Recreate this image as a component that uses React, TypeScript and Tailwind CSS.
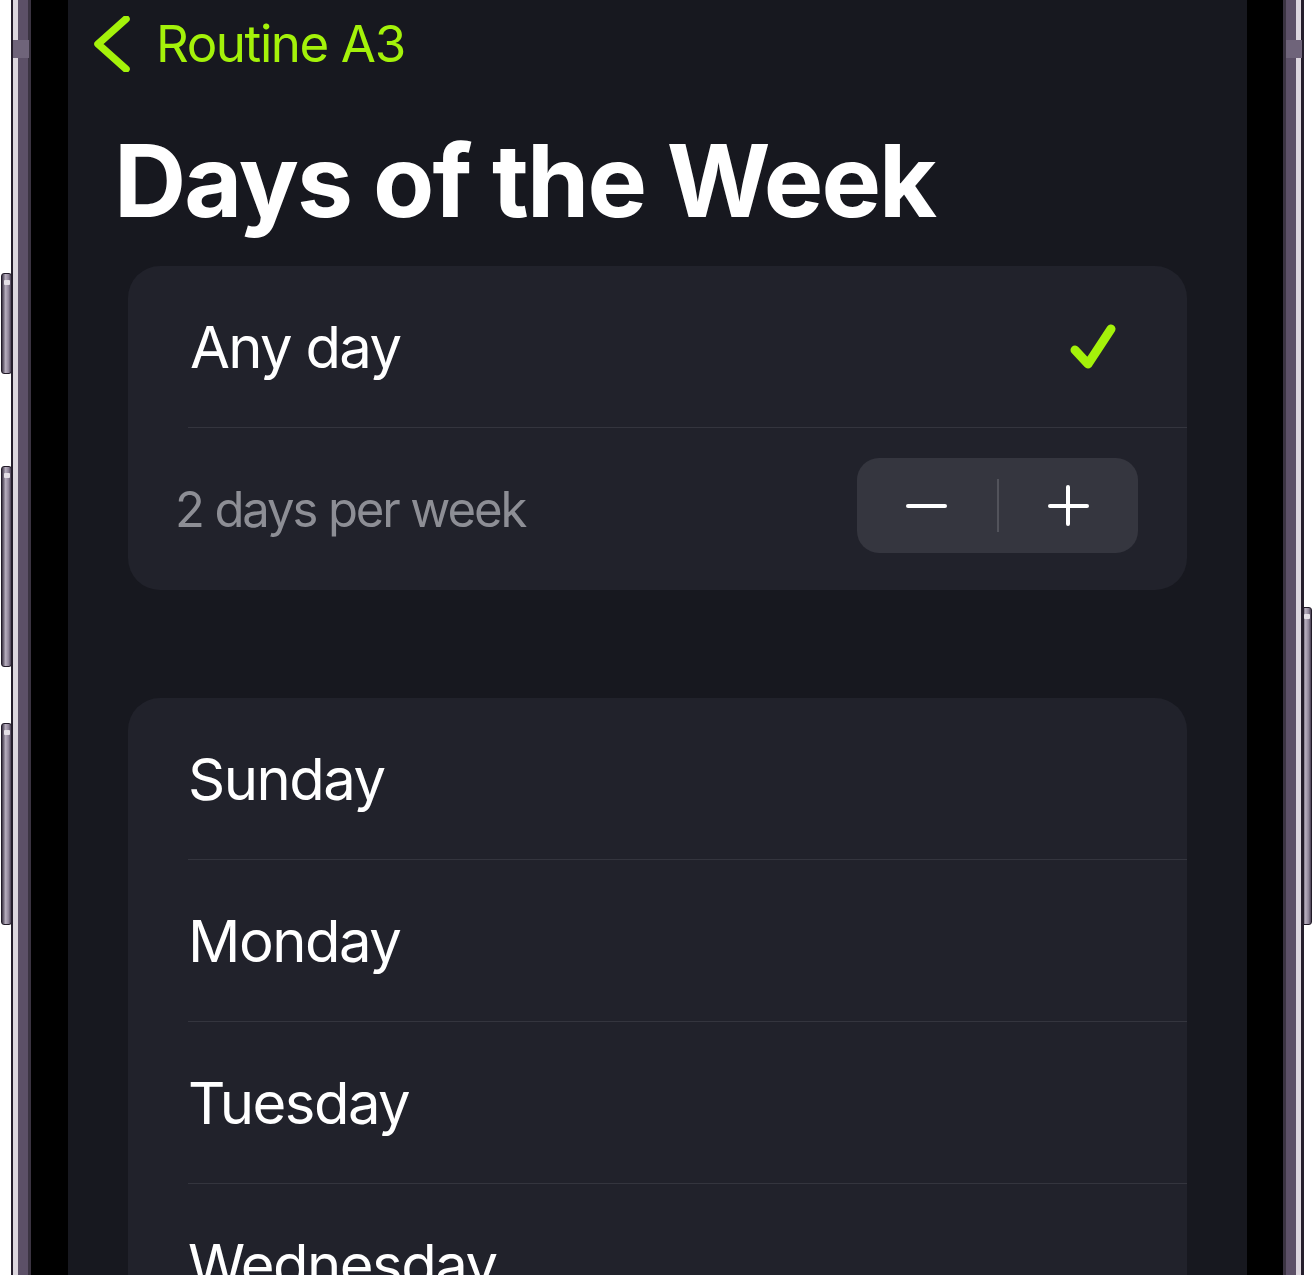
import React from "react";

const days = ["Sunday", "Monday", "Tuesday", "Wednesday"];

function SideButton({ className }: { className: string }) {
  return (
    <div
      className={`absolute w-[11px] rounded-[3px] border border-[#221b28] bg-[linear-gradient(to_right,#3b3344,#b6adbd_40%,#8c8196_75%,#4a4152)] ${className}`}
    >
      <div className="mx-auto mt-[6px] h-[5px] w-[6px] rounded-[1px] bg-[#e4dfe6]" />
    </div>
  );
}

export default function App() {
  return (
    <div
      className="relative h-[1275px] w-[1312px] overflow-hidden bg-white"
      style={{ fontFamily: "Inter, 'Noto Sans', sans-serif" }}
    >
      {/* hardware buttons */}
      <SideButton className="left-[1px] top-[273px] h-[101px]" />
      <SideButton className="left-[1px] top-[466px] h-[201px]" />
      <SideButton className="left-[1px] top-[723px] h-[202px]" />
      <SideButton className="left-[1301px] top-[607px] h-[318px]" />

      <div className="ml-[11px] flex h-full w-[1293px]">
        {/* left frame */}
        <div className="relative w-[20px] bg-[linear-gradient(to_right,#241d2b_0px,#241d2b_2px,#dcd6de_2px,#dcd6de_7px,#5c5067_7px,#5c5067_17px,#3a3341_17px)]">
          <div className="absolute left-[2px] top-[40px] h-[18px] w-[16px] bg-[#6f647a]" />
        </div>
        <div className="w-[37px] bg-black" />

        {/* screen */}
        <div className="flex w-[1179px] flex-col bg-[#17181f] text-white">
          <div className="mt-[18px] flex h-[51px] items-center pl-[26px]">
            <svg width="36" height="56" viewBox="0 0 36 56" fill="none">
              <path
                d="M32 3 L4 28 L32 53"
                stroke="#a4f20a"
                strokeWidth="7.5"
                strokeLinecap="round"
                strokeLinejoin="round"
              />
            </svg>
            <span className="ml-[26px] text-[51px] leading-none tracking-[-1.4px] text-[#a4f20a]">
              Routine A3
            </span>
          </div>

          <h1 className="ml-[46px] mt-[62px] text-[100px] font-bold leading-none tracking-[-1.9px]">
            Days of the Week
          </h1>

          {/* card: any day */}
          <div className="mx-[60px] mt-[35px] rounded-[32px] bg-[#21222b]">
            <div className="flex h-[161px] items-center justify-between pl-[62px] pr-[70px]">
              <span className="text-[58px] leading-none tracking-[-1.7px]">Any day</span>
              <svg width="50" height="50" viewBox="0 0 50 50" fill="none">
                <path
                  d="M8 28 L21 42 L44 7"
                  stroke="#a4f20a"
                  strokeWidth="9"
                  strokeLinecap="round"
                  strokeLinejoin="round"
                />
              </svg>
            </div>
            <div className="ml-[60px] h-px bg-[#34353e]" />
            <div className="flex h-[162px] items-center justify-between pl-[47px] pr-[49px]">
              <span className="text-[49px] leading-none tracking-[-2.1px] text-[#8d8e95]">
                2 days per week
              </span>
              <div className="mb-[7px] flex h-[95px] w-[281px] items-center rounded-[22px] bg-[#35363f]">
                <div className="flex h-full flex-1 items-center justify-center">
                  <div className="h-[4px] w-[41px] rounded-full bg-white" />
                </div>
                <div className="h-[53px] w-[2px] bg-[#52535b]" />
                <div className="flex h-full flex-1 items-center justify-center">
                  <div className="relative h-[41px] w-[41px]">
                    <div className="absolute left-0 top-[18.5px] h-[4px] w-[41px] rounded-full bg-white" />
                    <div className="absolute left-[18.5px] top-0 h-[41px] w-[4px] rounded-full bg-white" />
                  </div>
                </div>
              </div>
            </div>
          </div>

          {/* card: days */}
          <div className="mx-[60px] mt-[108px] rounded-t-[32px] bg-[#21222b]">
            {days.map((d, i) => (
              <div key={d}>
                {i > 0 && <div className="ml-[60px] h-px bg-[#34353e]" />}
                <div className="flex h-[161px] items-center pl-[60px]">
                  <span className="text-[58px] leading-none tracking-[-1.5px]">{d}</span>
                </div>
              </div>
            ))}
          </div>
        </div>

        <div className="w-[36px] bg-black" />
        {/* right frame */}
        <div className="relative w-[21px] bg-[linear-gradient(to_right,#3a3341_0px,#3a3341_3px,#5c5067_3px,#5c5067_13px,#dcd6de_13px,#dcd6de_18px,#241d2b_18px)]">
          <div className="absolute left-[3px] top-[40px] h-[18px] w-[16px] bg-[#6f647a]" />
        </div>
      </div>
    </div>
  );
}
